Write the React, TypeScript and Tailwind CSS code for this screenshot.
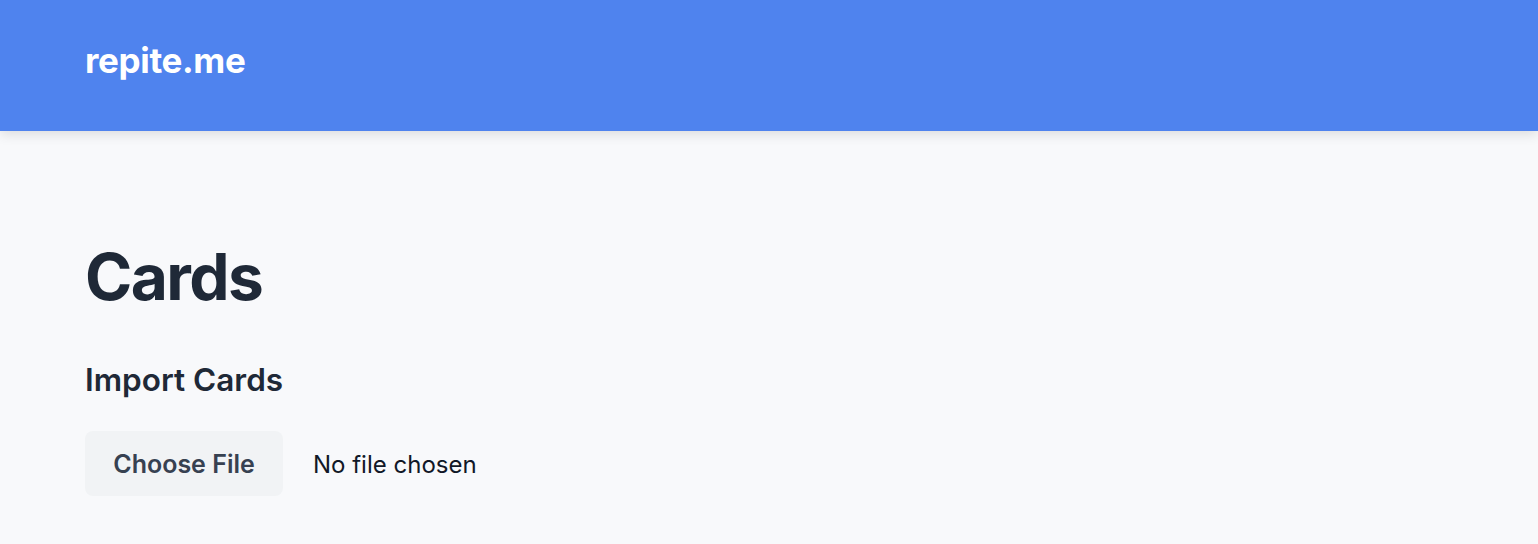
export default function App() {
  return (
    <div className="min-h-screen bg-[#f8f9fb] font-['Inter',sans-serif] text-[#1f2937]">
      <header className="h-[131px] bg-[#4f83ee] shadow-[0_3px_12px_rgba(0,0,0,0.12)] flex items-center px-[85px] pb-[10px]">
        <span className="text-[35px] font-bold text-white tracking-[-0.01em] leading-none">repite.me</span>
      </header>

      <main className="px-[85px] pt-[107px]">
        <h1 className="text-[64px] font-bold leading-[77px] tracking-[-0.025em]">Cards</h1>

        <h2 className="mt-[46px] text-[31.5px] font-semibold leading-[37px]">Import Cards</h2>

        {/* File picker */}
        <div className="mt-[33px] flex items-center gap-[30px]">
          <button className="h-[65px] w-[198px] rounded-[8px] bg-[#f1f3f5] text-[25px] font-semibold text-[#374151] flex items-center justify-center pt-[2px]">
            Choose File
          </button>
          <span className="text-[24px] text-[#111827] pt-[2px]">No file chosen</span>
        </div>
      </main>
    </div>
  );
}
